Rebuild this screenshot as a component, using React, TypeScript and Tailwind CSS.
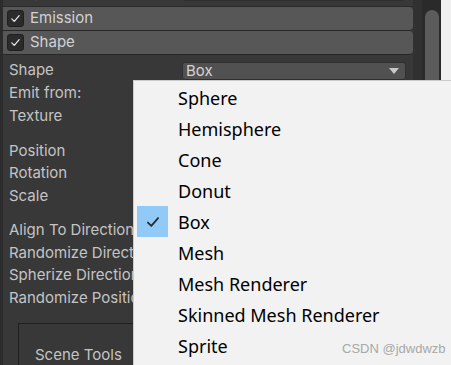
import { ReactNode } from "react";

const labelFont = { fontFamily: "Inter, 'Liberation Sans', sans-serif" };
const menuFont = { fontFamily: "'Noto Sans', 'Open Sans', sans-serif" };

const shapeOptions = [
  "Sphere",
  "Hemisphere",
  "Cone",
  "Donut",
  "Box",
  "Mesh",
  "Mesh Renderer",
  "Skinned Mesh Renderer",
  "Sprite",
];

function Check({ className }: { className?: string }) {
  return (
    <svg viewBox="0 0 16 16" className={className} fill="none" stroke="currentColor" strokeWidth={1.6}>
      <path d="M3.5 8.5 L6.5 11.5 L12.5 4.5" strokeLinecap="round" strokeLinejoin="round" />
    </svg>
  );
}

function ModuleHeader({ title }: { title: string }) {
  return (
    <div className="flex h-[24px] items-center gap-[6px] rounded-r-[4px] border-b border-[#272727] bg-[#575757] pl-[4px]">
      <div className="flex h-[17px] w-[17px] items-center justify-center rounded-[3px] border border-[#1f1f1f] bg-[#2b2b2b] text-[#e6e6e6]">
        <Check className="h-[13px] w-[13px]" />
      </div>
      <span className="text-[15px] text-[#d2d2d2]">{title}</span>
    </div>
  );
}

function Row({ label, children }: { label: string; children?: ReactNode }) {
  return (
    <div className="flex h-[22.75px] items-center pl-[6px] pr-[7px]">
      <span className="w-[173px] shrink-0 whitespace-nowrap text-[15px] text-[#c4c4c4]">{label}</span>
      {children}
    </div>
  );
}

function Dropdown({ value }: { value: string }) {
  return (
    <div className="flex h-[18px] flex-1 items-center justify-between rounded-[3px] border border-[#2f2f2f] bg-[#515151] pl-[3px] pr-[6px]">
      <span className="text-[15px] leading-none text-[#d4d4d4]">{value}</span>
      <svg viewBox="0 0 10 6" className="h-[6px] w-[10px]">
        <path d="M0 0 H10 L5 6 Z" fill="#c8c8c8" />
      </svg>
    </div>
  );
}

export default function App() {
  return (
    <div className="relative flex h-[365px] w-[451px] overflow-hidden bg-[#383838]" style={labelFont}>
      <div className="w-[3px] shrink-0 bg-[#2c2c2c]" />

      <div className="flex w-[410px] shrink-0 flex-col">
        <div className="-mt-[19px]">
          <Row label="Ring Buffer Mode">
            <Dropdown value="Disabled" />
          </Row>
        </div>
        <div className="mt-[2px] border-t border-[#2a2a2a]">
          <ModuleHeader title="Emission" />
          <ModuleHeader title="Shape" />
        </div>

        <div className="mt-[4.5px]">
          <Row label="Shape">
            <Dropdown value="Box" />
          </Row>
          <Row label="Emit from:" />
          <Row label="Texture" />
        </div>

        <div className="mt-[12px]">
          <Row label="Position" />
          <Row label="Rotation" />
          <Row label="Scale" />
        </div>

        <div className="mt-[11px]">
          <Row label="Align To Direction" />
          <Row label="Randomize Direction" />
          <Row label="Spherize Direction" />
          <Row label="Randomize Position" />
        </div>

        <div className="ml-[15px] mt-[13px] h-[60px] border-l border-t border-[#1f1f1f] pl-[16px] pt-[18px]">
          <span className="text-[15px] text-[#c4c4c4]">Scene Tools</span>
        </div>
      </div>

      <div className="w-[9px] shrink-0 bg-[#313131]" />
      <div className="w-[19px] shrink-0 bg-[#2a2a2a] px-[3px] pt-[10px]">
        <div className="h-[300px] w-[14px] rounded-full bg-[#5c5c5c]" />
      </div>
      <div className="flex-1 bg-[#f0f0f0]" />

      <div
        className="absolute left-[133px] top-[80px] -right-[20px] -bottom-[20px] border-l border-t border-[#cccccc] bg-[#f2f2f2] pl-[3px] pt-[1px]"
        style={menuFont}
      >
        {shapeOptions.map((opt) => (
          <div key={opt} className="flex h-[31px] items-center">
            <div
              className={`flex h-[31px] w-[31px] items-center justify-center ${
                opt === "Box" ? "bg-[#91c9f7]" : ""
              }`}
            >
              {opt === "Box" && <Check className="h-[18px] w-[18px] text-[#2b2b2b]" />}
            </div>
            <span className="ml-[10px] text-[18px] leading-none text-black">{opt}</span>
          </div>
        ))}
        <span
          className="absolute left-[208px] top-[258px] text-[13px] text-[#a8a8a8]"
          style={{ fontFamily: "'Liberation Sans', Arial, sans-serif" }}
        >
          CSDN @jdwdwzb
        </span>
      </div>
    </div>
  );
}
